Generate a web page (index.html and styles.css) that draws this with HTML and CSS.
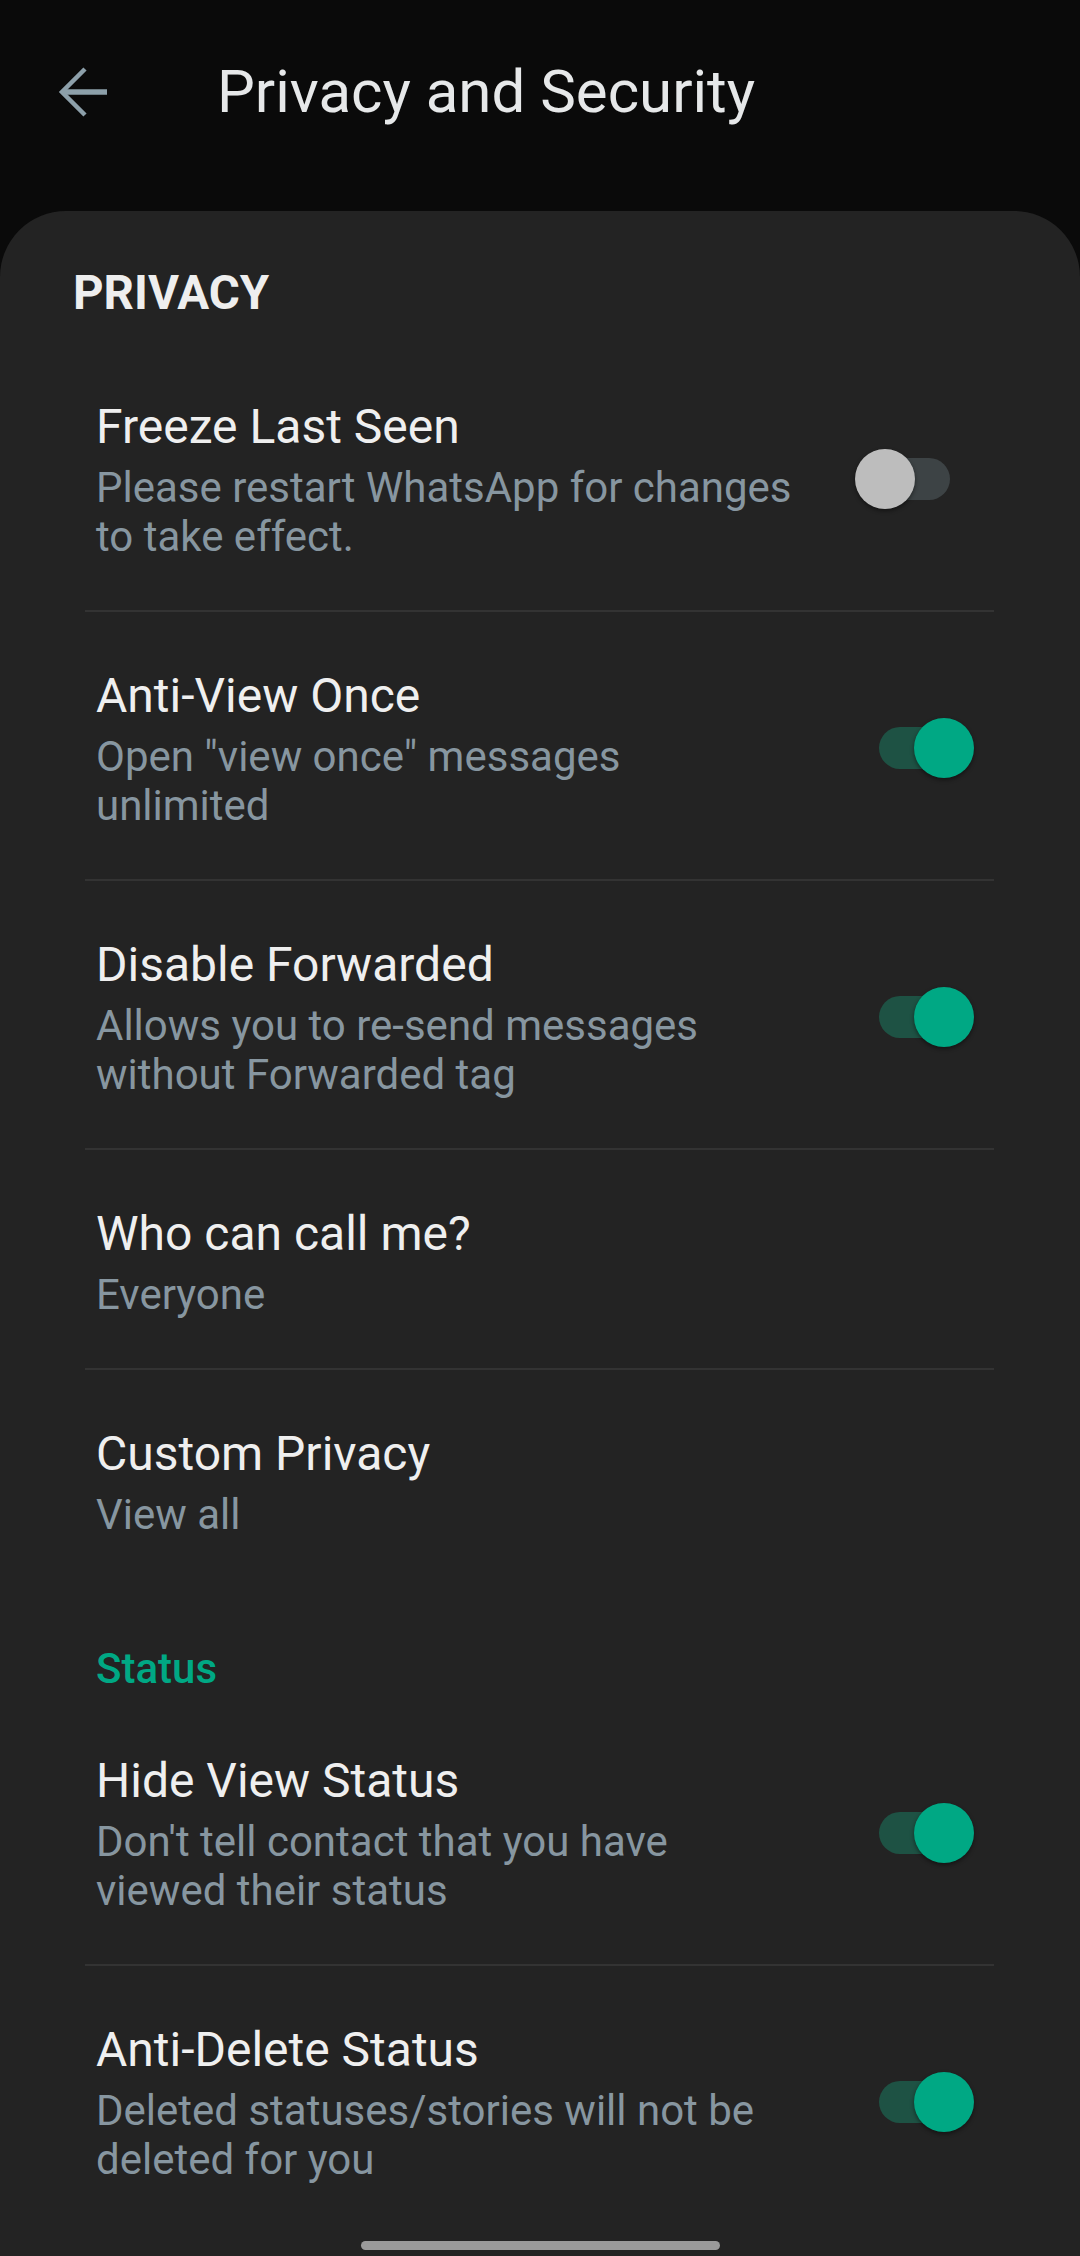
FILE: index.html
```html
<!DOCTYPE html>
<html lang="en">
<head>
<meta charset="utf-8">
<title>Privacy and Security</title>
<link rel="stylesheet" href="styles.css">
</head>
<body>
<div class="screen">
  <header class="appbar">
    <svg class="back" width="50" height="50" viewBox="0 0 50 50" aria-hidden="true">
      <path d="M4 25 H49" stroke="currentColor" stroke-width="5.5" fill="none"/>
      <path d="M27 2 L4 25 L27 48" stroke="currentColor" stroke-width="4.5" fill="none" stroke-linejoin="miter"/>
    </svg>
    <h1 class="title">Privacy and Security</h1>
  </header>

  <main class="card">
    <div class="group-title">PRIVACY</div>

    <div class="row divided">
      <div class="text">
        <div class="label">Freeze Last Seen</div>
        <div class="sub">Please restart WhatsApp for changes<br>to take effect.</div>
      </div>
      <div class="switch off"><span class="track"></span><span class="thumb"></span></div>
    </div>

    <div class="row divided">
      <div class="text">
        <div class="label">Anti-View Once</div>
        <div class="sub">Open "view once" messages<br>unlimited</div>
      </div>
      <div class="switch on"><span class="track"></span><span class="thumb"></span></div>
    </div>

    <div class="row divided">
      <div class="text">
        <div class="label">Disable Forwarded</div>
        <div class="sub">Allows you to re-send messages<br>without Forwarded tag</div>
      </div>
      <div class="switch on"><span class="track"></span><span class="thumb"></span></div>
    </div>

    <div class="row divided">
      <div class="text">
        <div class="label">Who can call me?</div>
        <div class="sub">Everyone</div>
      </div>
    </div>

    <div class="row">
      <div class="text">
        <div class="label">Custom Privacy</div>
        <div class="sub">View all</div>
      </div>
    </div>

    <div class="section-title">Status</div>

    <div class="row divided">
      <div class="text">
        <div class="label">Hide View Status</div>
        <div class="sub">Don't tell contact that you have<br>viewed their status</div>
      </div>
      <div class="switch on"><span class="track"></span><span class="thumb"></span></div>
    </div>

    <div class="row">
      <div class="text">
        <div class="label">Anti-Delete Status</div>
        <div class="sub">Deleted statuses/stories will not be<br>deleted for you</div>
      </div>
      <div class="switch on"><span class="track"></span><span class="thumb"></span></div>
    </div>
  </main>

  <div class="home-indicator"></div>
</div>
</body>
</html>
```

FILE: styles.css
```css
* { box-sizing: border-box; }

html, body {
  margin: 0;
  padding: 0;
  background: #0a0a0a;
}

body {
  font-family: Roboto, "Noto Sans", "Liberation Sans", sans-serif;
  width: 1080px;
  height: 2256px;
  overflow: hidden;
}

.screen {
  position: relative;
  width: 1080px;
  height: 2256px;
  display: flex;
  flex-direction: column;
}

.appbar {
  height: 211px;
  padding: 0 0 27px 58px;
  display: flex;
  align-items: center;
  flex-shrink: 0;
}

.back {
  color: #8da0aa;
  flex-shrink: 0;
}

.title {
  margin: 0 0 0 109px;
  font-size: 60px;
  font-weight: 400;
  color: #e6e8e9;
  line-height: 64px;
  letter-spacing: 0;
}

.card {
  flex: 1;
  background: #232323;
  border-radius: 66px 66px 0 0;
  padding: 54px 0 0 0;
}

.group-title {
  padding-left: 73px;
  font-size: 47.5px;
  font-weight: 700;
  line-height: 56px;
  color: #eeeeee;
  margin-bottom: 22px;
}

.section-title {
  padding: 54px 0 0 96px;
  font-size: 42px;
  font-weight: 500;
  line-height: 50px;
  color: #00a884;
  margin-bottom: 3px;
}

.row {
  margin: 0 86px 0 85px;
  padding: 54px 0 51px 11px;
  display: flex;
  align-items: center;
}

.row.divided {
  border-bottom: 2px solid #333333;
  padding-bottom: 49px;
}

.text {
  flex: 1;
  min-width: 0;
  white-space: nowrap;
}

.label {
  font-size: 48px;
  line-height: 60px;
  color: #efefef;
}

.sub {
  margin-top: 6px;
  font-size: 42px;
  line-height: 49px;
  color: #8796a0;
}

.switch {
  position: relative;
  width: 98px;
  height: 60px;
  flex-shrink: 0;
  margin-right: 20px;
}

.switch.off {
  margin-right: 41px;
}

.track {
  position: absolute;
  left: 3px;
  right: 3px;
  top: 9px;
  height: 42px;
  border-radius: 21px;
}

.thumb {
  position: absolute;
  top: 0;
  width: 60px;
  height: 60px;
  border-radius: 50%;
  box-shadow: 0 2px 4px rgba(0, 0, 0, 0.45);
}

.switch.off .track { background: #3d4345; }
.switch.off .thumb { left: 0; background: #bdbdbd; }

.switch.on .track { background: #1e5244; }
.switch.on .thumb { right: 0; background: #00a884; }

.home-indicator {
  position: absolute;
  left: 361px;
  top: 2241px;
  width: 359px;
  height: 9px;
  border-radius: 5px;
  background: #9a9a9a;
}
```
